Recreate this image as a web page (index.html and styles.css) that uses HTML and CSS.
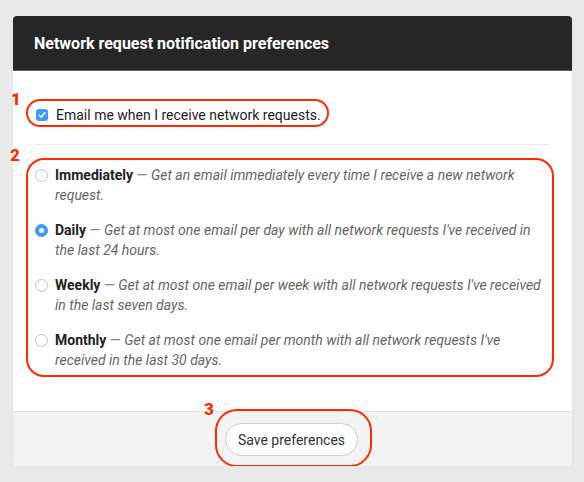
FILE: index.html
```html
<!DOCTYPE html>
<html lang="en">
<head>
  <meta charset="UTF-8">
  <meta name="viewport" content="width=device-width, initial-scale=1.0">
  <title>Notification preferences</title>
  <link rel="stylesheet" href="styles.css">
</head>
<body>
  <div class="card">
    <div class="card-header">
      <h2>Network request notification preferences</h2>
    </div>
    <div class="card-body">
      <div class="note note-1">
        <span class="note-num">1</span>
        <label class="check">
          <input type="checkbox" checked>
          <span>Email me when I receive network requests.</span>
        </label>
      </div>
      <hr class="divider">
      <div class="note note-2">
        <span class="note-num">2</span>
        <label class="option">
          <input type="radio" name="freq">
          <span><b>Immediately</b> <span class="dash">—</span> <i>Get an email immediately every time I receive a new network request.</i></span>
        </label>
        <label class="option">
          <input type="radio" name="freq" checked>
          <span><b>Daily</b> <span class="dash">—</span> <i>Get at most one email per day with all network requests I've received in the last 24 hours.</i></span>
        </label>
        <label class="option">
          <input type="radio" name="freq">
          <span><b>Weekly</b> <span class="dash">—</span> <i>Get at most one email per week with all network requests I've received in the last seven days.</i></span>
        </label>
        <label class="option">
          <input type="radio" name="freq">
          <span><b>Monthly</b> <span class="dash">—</span> <i>Get at most one email per month with all network requests I've received in the last 30 days.</i></span>
        </label>
      </div>
    </div>
    <div class="card-footer">
      <div class="note note-3">
        <span class="note-num">3</span>
        <button class="save">Save preferences</button>
      </div>
    </div>
  </div>
</body>
</html>
```

FILE: styles.css
```css
* {
  box-sizing: border-box;
}
body {
  margin: 0;
  background: #e9e9e9;
  font-family: Roboto, "Liberation Sans", sans-serif;
  font-size: 14px;
  color: #222;
}
.card {
  width: 559px;
  margin: 16px 0 0 13px;
  background: white;
  border-radius: 4px;
  box-shadow: 0 1px 2px rgba(0, 0, 0, 0.08);
}
.card-header {
  height: 55px;
  padding: 0 21px;
  display: flex;
  align-items: center;
  background: #262626;
  border-bottom: 1px solid #5c5c5c;
  border-radius: 4px 4px 0 0;
}
.card-header h2 {
  margin: 0;
  color: white;
  font-size: 16px;
  font-weight: 700;
}
.card-body {
  padding: 34px 23px 41px 22px;
}
.note {
  position: relative;
}
.note::after {
  content: "";
  position: absolute;
  border: 2.5px solid #ff2a00;
  pointer-events: none;
}
.note-num {
  position: absolute;
  color: #ff2a00;
  font-size: 17px;
  font-weight: 900;
  line-height: 1;
  text-shadow: 1px 1px 0 white, -1px -1px 0 white, 1px -1px 0 white, -1px 1px 0 white;
}
.note-1 {
  display: inline-block;
}
.note-1::after {
  top: -6px;
  bottom: -2px;
  left: -9px;
  right: -8px;
  border-radius: 15px;
}
.note-1 .note-num {
  left: -24px;
  top: -14px;
}
.note-2::after {
  top: -7px;
  bottom: -7px;
  left: -9px;
  right: -5px;
  border-radius: 18px;
}
.note-2 .note-num {
  left: -25px;
  top: -18px;
}
.note-3 {
  display: inline-block;
}
.note-3::after {
  top: -14px;
  bottom: -11px;
  left: -10px;
  right: -12px;
  border-radius: 22px;
}
.note-3 .note-num {
  left: -21px;
  top: -22px;
}
.check {
  display: flex;
  align-items: center;
  gap: 8px;
  line-height: 20px;
}
.check input {
  appearance: none;
  width: 12px;
  height: 12px;
  margin: 0 0 0 1px;
  border-radius: 3px;
  background: #3b99fc url("data:image/svg+xml,%3Csvg xmlns='http://www.w3.org/2000/svg' viewBox='0 0 12 12'%3E%3Cpath d='M3.2 6.2l2 2 3.8-4.6' fill='none' stroke='white' stroke-width='1.5' stroke-linecap='round' stroke-linejoin='round'/%3E%3C/svg%3E") center / 12px no-repeat;
}
.divider {
  border: 0;
  border-top: 1px solid #ececec;
  margin: 19px 0 20px;
}
.option {
  display: flex;
  align-items: flex-start;
  gap: 7px;
  line-height: 20px;
  margin-bottom: 15px;
}
.option:last-child {
  margin-bottom: 0;
}
.option input {
  appearance: none;
  flex: none;
  width: 13px;
  height: 13px;
  margin: 4px 0 0;
  border: 1px solid #c3c3c3;
  border-radius: 50%;
  background: white;
}
.option input:checked {
  border: 4px solid #3b99fc;
  background: white;
}
.option b {
  color: #222;
}
.option .dash {
  color: #888;
}
.option i {
  color: #666;
}
.card-footer {
  padding: 11px 0 10px;
  display: flex;
  justify-content: center;
  background: #f3f3f3;
  border-top: 1px solid #e3e3e3;
  border-radius: 0 0 4px 4px;
}
.save {
  height: 33px;
  padding: 0 12px;
  margin-right: 2px;
  border: 1px solid #cfcfcf;
  border-radius: 17px;
  background: white;
  color: #333;
  font-family: inherit;
  font-size: 14px;
}
```
